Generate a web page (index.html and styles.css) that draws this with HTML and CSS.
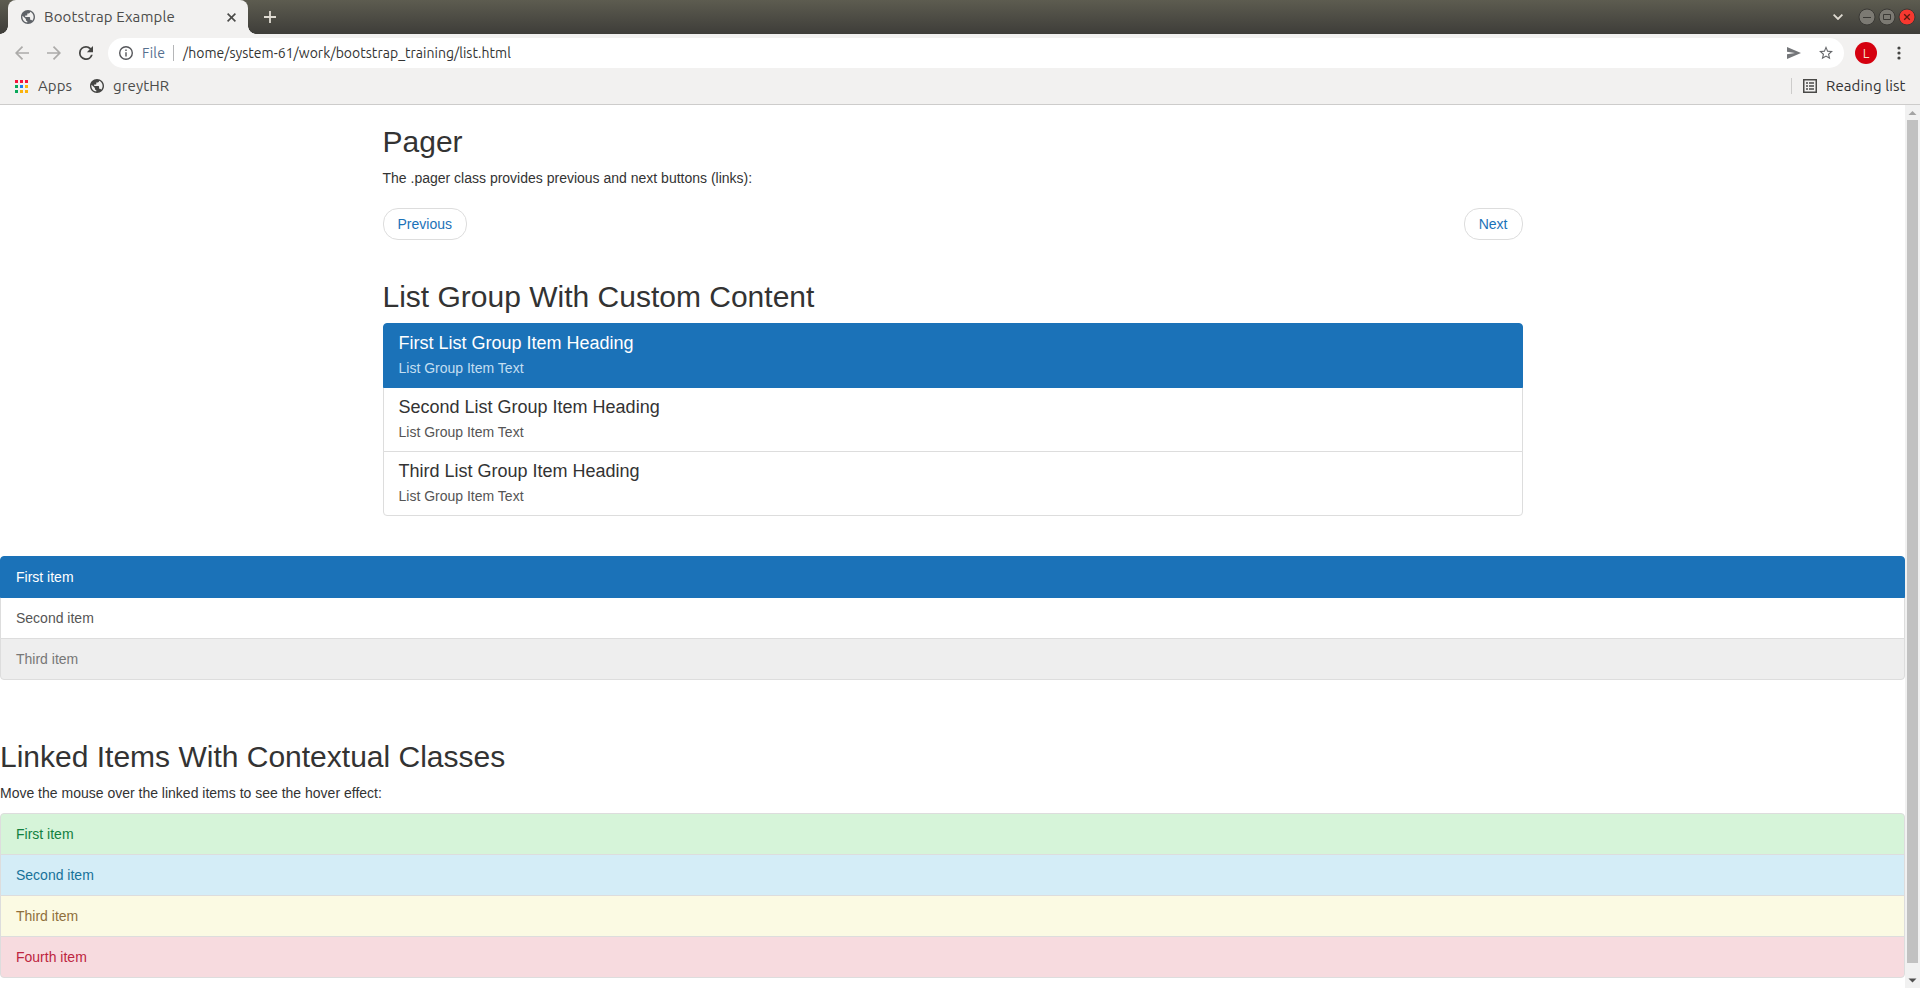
FILE: index.html
```html
<!DOCTYPE html>
<html lang="en">
<head>
<meta charset="utf-8">
<title>Bootstrap Example</title>
<link rel="stylesheet" href="styles.css">
</head>
<body>
<svg width="0" height="0" class="defs">
  <symbol id="globe" viewBox="2 2 20 20"><path d="M12 2C6.48 2 2 6.48 2 12s4.48 10 10 10 10-4.48 10-10S17.52 2 12 2zm-1 17.93c-3.95-.49-7-3.85-7-7.93 0-.62.08-1.21.21-1.79L9 15v1c0 1.1.9 2 2 2v1.93zm6.9-2.54c-.26-.81-1-1.39-1.9-1.39h-1v-3c0-.55-.45-1-1-1H8v-2h2c.55 0 1-.45 1-1V7h2c1.1 0 2-.9 2-2v-.41c2.93 1.19 5 4.06 5 7.41 0 2.08-.8 3.97-2.1 5.39z" fill="currentColor"/></symbol>
</svg>
<header class="browser">
  <div class="titlebar">
    <div class="tab">
      <svg class="tab-icon" width="14" height="14"><use href="#globe"/></svg>
      <span class="tab-title">Bootstrap Example</span>
      <svg class="tab-close" width="9" height="9" viewBox="0 0 9 9"><path d="M.6.6l7.800 7.800M8.400.6L.6 8.400" stroke="#4a4a48" stroke-width="1.600"/></svg>
    </div>
    <svg class="new-tab" width="12" height="12" viewBox="0 0 12 12"><path d="M6 0v12M0 6h12" stroke="#dfdbd2" stroke-width="1.8"/></svg>
    <div class="window-controls">
      <svg class="chevron" width="10" height="6" viewBox="0 0 10 6"><path d="M.6.6L5 5 9.400.6" fill="none" stroke="#dfdbd2" stroke-width="1.8"/></svg>
      <svg width="18" height="18" viewBox="0 0 18 18"><circle cx="9" cy="9" r="8" fill="#7c7a73" stroke="#3a3935"/><path d="M5 9.500h8" stroke="#3b3a36"/></svg>
      <svg width="18" height="18" viewBox="0 0 18 18"><circle cx="9" cy="9" r="8" fill="#7c7a73" stroke="#3a3935"/><path d="M5.500 6.500h7v5h-7z" fill="none" stroke="#3b3a36"/></svg>
      <svg width="18" height="18" viewBox="0 0 18 18"><circle cx="9" cy="9" r="8" fill="#f7382f" stroke="#3a3935"/><path d="M6.200 6.200l5.600 5.600M11.800 6.200l-5.600 5.600" stroke="#5a1a10" stroke-width="1.300"/></svg>
    </div>
  </div>
  <div class="toolbar">
    <div class="nav-icons">
      <svg width="14" height="14" viewBox="0 0 14 14"><path d="M14 7H1.500M7.500 .7L1.200 7l6.300 6.300" fill="none" stroke="#acaba9" stroke-width="1.700"/></svg>
      <svg width="14" height="14" viewBox="0 0 14 14"><path d="M0 7h12.500M6.500 .7L12.800 7l-6.300 6.300" fill="none" stroke="#acaba9" stroke-width="1.700"/></svg>
      <svg width="14" height="14" viewBox="4 4 16 16"><path d="M17.650 6.350A7.960 7.960 0 0 0 12 4a8 8 0 1 0 7.730 10h-2.080A6 6 0 1 1 12 6c1.660 0 3.140.69 4.220 1.780L13 11h7V4z" fill="#454543"/></svg>
    </div>
    <div class="omnibox">
      <svg class="info" width="14" height="14" viewBox="2 2 20 20"><path d="M11 17h2v-6h-2v6zm1-15a10 10 0 1 0 0 20 10 10 0 0 0 0-20zm0 18a8 8 0 1 1 0-16 8 8 0 0 1 0 16zM11 9h2V7h-2v2z" fill="#55565a"/></svg>
      <span class="scheme">File</span>
      <span class="scheme-rule"></span>
      <span class="url">/home/system-61/work/bootstrap_training/list.html</span>
      <svg class="send" width="14" height="12" viewBox="0 0 14 12"><path d="M0 0l14 6L0 12V7.300L8 6 0 4.700z" fill="#747679"/></svg>
      <svg width="14" height="14" viewBox="2 2 20 20"><path d="M22 9.240l-7.190-.62L12 2 9.190 8.630 2 9.240l5.460 4.730L5.820 21 12 17.270 18.180 21l-1.630-7.030L22 9.240zM12 15.400l-3.760 2.270 1-4.280-3.320-2.880 4.380-.38L12 6.100l1.710 4.040 4.380.38-3.320 2.880 1 4.280L12 15.400z" fill="#66686b"/></svg>
    </div>
    <span class="avatar">L</span>
    <svg class="kebab" width="4" height="14" viewBox="0 0 4 14"><g fill="#454543"><circle cx="2" cy="2" r="1.600"/><circle cx="2" cy="7" r="1.600"/><circle cx="2" cy="12" r="1.600"/></g></svg>
  </div>
  <div class="bookmarks">
    <svg width="13" height="13" viewBox="0 0 13 13"><path d="M0 0h3v3H0zM5 0h3v3H5zM10 0h3v3h-3z" fill="#f5133b"/><path d="M0 5h3v3H0zM0 10h3v3H0z" fill="#0aa85a"/><path d="M5 5h3v3H5z" fill="#1a7cf0"/><path d="M10 5h3v3h-3zM5 10h3v3H5zM10 10h3v3h-3z" fill="#fbb30c"/></svg>
    <span class="apps">Apps</span>
    <svg width="14" height="14" class="bm-globe"><use href="#globe"/></svg>
    <span class="grey">greytHR</span>
    <span class="bm-rule"></span>
    <svg width="14" height="14" viewBox="0 0 14 14"><path d="M.75.75h12.500v12.500H.75z" fill="none" stroke="#4a4a48" stroke-width="1.500"/><path d="M3 4h2M3 7h2M3 10h2M6 4h5M6 7h5M6 10h5" stroke="#4a4a48" stroke-width="1.300"/></svg>
    <span class="reading">Reading list</span>
  </div>
</header>
<div class="viewport">
  <main class="page">
    <section class="container">
      <h2>Pager</h2>
      <p>The .pager class provides previous and next buttons (links):</p>
      <ul class="pager"><li><a>Previous</a></li><li><a>Next</a></li></ul>
    </section>
    <section class="container">
      <h2>List Group With Custom Content</h2>
      <div class="list-group">
        <a class="item active"><h4>First List Group Item Heading</h4><p>List Group Item Text</p></a>
        <a class="item"><h4>Second List Group Item Heading</h4><p>List Group Item Text</p></a>
        <a class="item"><h4>Third List Group Item Heading</h4><p>List Group Item Text</p></a>
      </div>
    </section>
    <section class="states">
      <div class="list-group">
        <a class="item active">First item</a>
        <a class="item">Second item</a>
        <a class="item disabled">Third item</a>
      </div>
    </section>
    <section class="contextual">
      <h2>Linked Items With Contextual Classes</h2>
      <p>Move the mouse over the linked items to see the hover effect:</p>
      <div class="list-group">
        <a class="item success">First item</a>
        <a class="item info-item">Second item</a>
        <a class="item warning">Third item</a>
        <a class="item danger">Fourth item</a>
      </div>
    </section>
  </main>
  <div class="scrollbar">
    <svg width="15" height="15" viewBox="0 0 15 15"><path d="M3.500 10L7.500 6l4 4z" fill="#a3a3a3"/></svg>
    <div class="thumb"></div>
    <svg class="down" width="15" height="15" viewBox="0 0 15 15"><path d="M3.500 5.500L7.500 9.500l4-4z" fill="#505050"/></svg>
  </div>
</div>
</body>
</html>
```
FILE: styles.css
```css
* { box-sizing: border-box; }
body {
  margin: 0;
  height: 988px;
  display: flex;
  flex-direction: column;
  overflow: hidden;
  background: #fff;
  color: #333;
  font: 14px/20px "Liberation Sans", Arial, sans-serif;
}
svg { display: block; flex: none; }
.defs { position: absolute; }

.browser {
  flex: none;
  height: 105px;
  background: #f2f1f0;
  border-bottom: 1px solid #cdcccb;
  font-family: Ubuntu, "Noto Sans", sans-serif;
  color: #4c4c4a;
  white-space: nowrap;
}
.titlebar {
  display: flex;
  align-items: center;
  height: 34px;
  padding: 0 4px 0 8px;
  background: linear-gradient(#5d5c50, #3e3d39);
}
.tab {
  position: relative;
  display: flex;
  align-items: center;
  width: 240px;
  height: 34px;
  padding: 0 12px 0 13px;
  background: #f2f1f0;
  border-radius: 8px 8px 0 0;
}
.tab::before, .tab::after {
  content: "";
  position: absolute;
  bottom: 0;
  width: 8px;
  height: 8px;
}
.tab::before { left: -8px; background: radial-gradient(circle at 0 0, transparent 7.500px, #f2f1f0 8px); }
.tab::after { right: -8px; background: radial-gradient(circle at 100% 0, transparent 7.500px, #f2f1f0 8px); }
.tab-icon { color: #5f6368; }
.tab-title { margin-left: 9px; font-size: 15px; letter-spacing: 0.13px; }
.tab-close { margin-left: auto; }
.new-tab { margin-left: 16px; }
.window-controls { display: flex; align-items: center; gap: 2px; margin-left: auto; }
.chevron { margin-right: 13px; }

.toolbar { display: flex; align-items: center; height: 38px; padding: 0 19px 0 15px; }
.nav-icons { display: flex; gap: 18px; margin-right: 15px; }
.omnibox {
  display: flex;
  align-items: center;
  flex: 1;
  height: 30px;
  padding: 0 11px;
  border-radius: 15px;
  background: #fff;
}
.scheme { margin-left: 9px; width: 23px; color: #56708f; font-size: 14px; letter-spacing: 0.3px; }
.scheme-rule { width: 1px; height: 16px; margin: 0 9px 0 8px; background: #b5b6b8; }
.url { color: #333; font-size: 14px; letter-spacing: 0.02px; }
.send { margin: 0 18px 0 auto; }
.avatar {
  width: 22px;
  height: 22px;
  margin: 0 20px 0 11px;
  border-radius: 50%;
  background: #d5000f;
  color: #f5dfc8;
  font-size: 13px;
  line-height: 22px;
  text-align: center;
}

.bookmarks { display: flex; align-items: center; height: 28px; padding: 0 14px 0 15px; font-size: 15px; letter-spacing: 0.1px; }
.apps { width: 34px; margin: 0 18px 0 10px; }
.bm-globe { color: #454543; }
.grey { margin-left: 9px; }
.bm-rule { width: 1px; height: 16px; margin: 0 11px 0 auto; background: #cdcccb; }
.reading { width: 80px; margin-left: 9px; color: #333; }

.viewport { display: flex; flex: 1; min-height: 0; }
.page { flex: 1; overflow: hidden; }
.container { width: 1170px; margin: 0 auto; padding: 0 15px; display: flow-root; }
h2, h4 { font-weight: 500; line-height: 1.1; }
h2 { margin: 20px 0 10px; font-size: 30px; }
h4 { margin: 0 0 5px; font-size: 18px; }
p { margin: 0 0 10px; }
.pager {
  display: flex;
  justify-content: space-between;
  margin: 20px 0;
  padding: 0;
  list-style: none;
}
.pager a {
  display: block;
  padding: 5px 14px;
  border: 1px solid #ddd;
  border-radius: 15px;
  color: #1b72b8;
}
.list-group { margin-bottom: 20px; }
.item {
  position: relative;
  display: block;
  margin-bottom: -1px;
  padding: 10px 15px;
  border: 1px solid #ddd;
  background: #fff;
  color: #555;
}
.item:first-child { border-radius: 4px 4px 0 0; }
.item:last-child { margin-bottom: 0; border-radius: 0 0 4px 4px; }
.item h4 { color: #333; }
.item p { margin: 0; line-height: 1.3; }
.item.active { z-index: 1; background: #1b72b8; border-color: #1b72b8; color: #fff; }
.item.active h4 { color: #fff; }
.item.active p { color: #c3dff2; }
.item.disabled { background: #eee; color: #777; }
.item.success { background: #d6f4d9; color: #12803f; }
.item.info-item { background: #d4edf7; color: #17729a; }
.item.warning { background: #fbfae3; color: #8f6f3c; }
.item.danger { background: #f7dbdf; color: #bd2540; }
.states { margin-top: 20px; display: flow-root; }
.contextual { padding-top: 20px; }

.scrollbar { display: flex; flex-direction: column; flex: none; width: 15px; background: #f1f1f1; }
.thumb { width: 11px; height: 843px; margin-left: 2px; background: #c1c1c1; }
.down { margin-top: auto; }
```
